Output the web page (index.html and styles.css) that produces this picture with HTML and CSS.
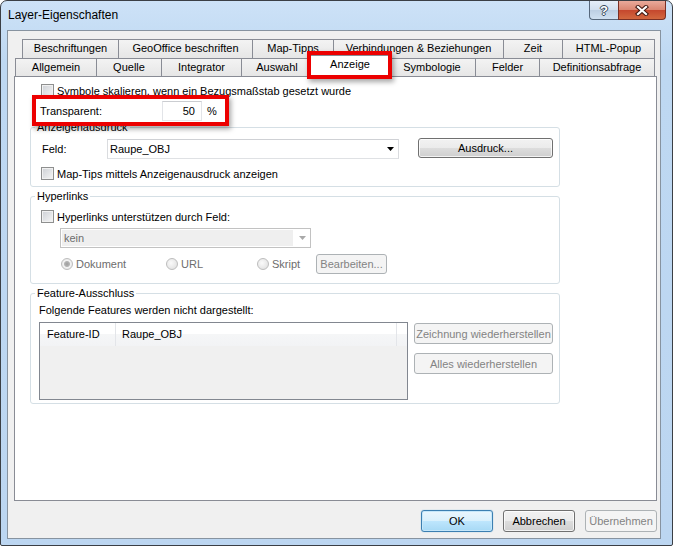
FILE: index.html
```html
<!DOCTYPE html>
<html lang="de">
<head>
    <meta charset="UTF-8">
    <title>Layer-Eigenschaften</title>
    <link rel="stylesheet" href="styles.css">
</head>
<body>
    <div class="window">
        <div class="titlebar">
            <span class="title">Layer-Eigenschaften</span>
            <div class="caption-buttons">
                <span class="cap-btn cap-help">?</span>
                <span class="cap-btn cap-close">
                    <svg width="14" height="11" viewBox="0 0 14 11">
                        <path d="M3 2 L11 9 M11 2 L3 9" stroke="#3f1710" stroke-width="4.2" stroke-linecap="square"/>
                        <path d="M3 2 L11 9 M11 2 L3 9" stroke="#ffffff" stroke-width="2.2" stroke-linecap="square"/>
                    </svg>
                </span>
            </div>
        </div>

        <div class="client">
            <div class="tabs">
                <div class="tab-row row-back">
                    <div class="tab">Beschriftungen</div>
                    <div class="tab">GeoOffice beschriften</div>
                    <div class="tab">Map-Tipps</div>
                    <div class="tab">Verbindungen &amp; Beziehungen</div>
                    <div class="tab">Zeit</div>
                    <div class="tab">HTML-Popup</div>
                </div>
                <div class="tab-row row-front">
                    <div class="tab">Allgemein</div>
                    <div class="tab">Quelle</div>
                    <div class="tab">Integrator</div>
                    <div class="tab">Auswahl</div>
                    <div class="tab active">Anzeige</div>
                    <div class="tab">Symbologie</div>
                    <div class="tab">Felder</div>
                    <div class="tab">Definitionsabfrage</div>
                </div>
            </div>

            <div class="panel">
                <div class="check-row top-check">
                    <span class="checkbox"></span>Symbole skalieren, wenn ein Bezugsmaßstab gesetzt wurde
                </div>
                <div class="transparent-row">
                    <span class="field-label">Transparent:</span>
                    <span class="textbox">50</span>
                    <span class="unit">%</span>
                </div>

                <fieldset class="group group-display">
                    <legend>Anzeigenausdruck</legend>
                    <div class="field-row">
                        <span class="field-name">Feld:</span>
                        <div class="combo combo-field">
                            <span>Raupe_OBJ</span>
                            <svg class="combo-arrow" width="7" height="4" viewBox="0 0 7 4"><polygon points="0,0 7,0 3.5,4" fill="#000"/></svg>
                        </div>
                        <button class="btn btn-expr">Ausdruck...</button>
                    </div>
                    <div class="check-row spaced">
                        <span class="checkbox"></span>Map-Tips mittels Anzeigenausdruck anzeigen
                    </div>
                </fieldset>

                <fieldset class="group group-links">
                    <legend>Hyperlinks</legend>
                    <div class="check-row">
                        <span class="checkbox"></span>Hyperlinks unterstützen durch Feld:
                    </div>
                    <div class="combo combo-disabled">
                        <span class="combo-text">kein</span>
                        <svg class="combo-arrow" width="7" height="4" viewBox="0 0 7 4"><polygon points="0,0 7,0 3.5,4" fill="#a9a9a9"/></svg>
                    </div>
                    <div class="radio-row">
                        <span class="radio-item"><span class="radio checked"></span>Dokument</span>
                        <span class="radio-item"><span class="radio"></span>URL</span>
                        <span class="radio-item"><span class="radio"></span>Skript</span>
                        <button class="btn btn-edit" disabled>Bearbeiten...</button>
                    </div>
                </fieldset>

                <fieldset class="group group-exclude">
                    <legend>Feature-Ausschluss</legend>
                    <div class="exclude-caption">Folgende Features werden nicht dargestellt:</div>
                    <div class="exclude-body">
                        <div class="listview">
                            <div class="list-header">
                                <span class="col col-id">Feature-ID</span>
                                <span class="col col-name">Raupe_OBJ</span>
                                <span class="col col-rest"></span>
                            </div>
                        </div>
                        <div class="exclude-buttons">
                            <button class="btn btn-restore" disabled>Zeichnung wiederherstellen</button>
                            <button class="btn btn-restore" disabled>Alles wiederherstellen</button>
                        </div>
                    </div>
                </fieldset>
            </div>

            <div class="dialog-buttons">
                <button class="btn btn-dialog btn-default">OK</button>
                <button class="btn btn-dialog">Abbrechen</button>
                <button class="btn btn-dialog" disabled>Übernehmen</button>
            </div>
        </div>

        <!-- annotation boxes from the screenshot -->
        <div class="highlight hl-tab"></div>
        <div class="highlight hl-transparent"></div>
    </div>
</body>
</html>
```

FILE: styles.css
```css
* {
    box-sizing: border-box;
}
body {
    margin: 0;
    font-family: "Liberation Sans", Arial, sans-serif;
    font-size: 11px;
    color: #000;
    background: #fff;
}
.window {
    position: relative;
    width: 673px;
    height: 546px;
    border: 1px solid #3b3f45;
    border-radius: 7px 7px 2px 2px;
    background: linear-gradient(#cde2f7, #bed8f2 60px, #bcd6f1);
    padding: 0 11px 6px 6px;
    display: flex;
    flex-direction: column;
}
.titlebar {
    height: 29px;
    margin: 0 -11px 0 -6px;
    padding: 0 6px 0 7px;
    display: flex;
    justify-content: space-between;
    align-items: flex-start;
}
.title {
    font-size: 12px;
    line-height: 28px;
}
.caption-buttons {
    display: flex;
}
.cap-btn {
    height: 19px;
    border: 1px solid #56677b;
    border-top: none;
    display: flex;
    align-items: center;
    justify-content: center;
}
.cap-help {
    width: 29px;
    border-right: none;
    border-radius: 0 0 0 4px;
    background: linear-gradient(#e6eef8, #d2dfee 50%, #bccee3 50%, #cfe0f1);
    color: #fff;
    font-weight: bold;
    font-size: 13px;
    text-shadow: 1px 0 0 #36475a, -1px 0 0 #36475a, 0 1px 0 #36475a, 0 -1px 0 #36475a;
}
.cap-close {
    width: 48px;
    border-color: #7a2f24;
    border-radius: 0 0 4px 0;
    background: linear-gradient(#e9aa9b, #da8570 50%, #c5462d 50%, #d2683f);
}
.client {
    flex: 1;
    display: flex;
    flex-direction: column;
    background: #f0f0f0;
    border: 1px solid #8793a0;
    padding: 8px 3px 6px 6px;
}
.tabs {
    display: flex;
    flex-direction: column;
}
.tab-row {
    display: grid;
}
.row-back {
    height: 19px;
    margin-left: 8px;
    grid-template-columns: 96px 134px 81px 170px 59px 93px;
}
.row-front {
    height: 18px;
    margin-left: 1px;
    grid-template-columns: 81px 65px 80px 71px 76px 87px 64px 116px;
}
.tab {
    border: 1px solid #898c95;
    border-right: none;
    border-bottom: none;
    background: linear-gradient(#f3f3f3, #e6e6e6);
    text-align: center;
    line-height: 17px;
    white-space: nowrap;
}
.tab:last-child {
    border-right: 1px solid #898c95;
}
.tab.active {
    position: relative;
    z-index: 2;
    margin: -3px -2px -1px;
    background: #fff;
    border-right: 1px solid #898c95;
    line-height: 16px;
}
.panel {
    flex: 1;
    background: #fff;
    border: 1px solid #898c95;
    padding: 7px 0 0 15px;
}
.check-row {
    display: flex;
    align-items: center;
    height: 13px;
}
.top-check {
    padding-left: 11px;
}
.check-row.spaced {
    margin-top: 8px;
}
.checkbox {
    width: 13px;
    height: 13px;
    margin-right: 3px;
    border: 1px solid #8e8f8f;
    background: linear-gradient(135deg, #cdd0d5, #f6f6f6);
    box-shadow: inset 0 0 0 1px #f1f1f1;
}
.transparent-row {
    display: flex;
    align-items: center;
    height: 20px;
    margin-top: 4px;
    padding-left: 10px;
}
.field-label {
    width: 122px;
}
.textbox {
    width: 40px;
    height: 20px;
    border: 1px solid;
    border-color: #cbcdd1 #e2e4e8 #e6e8eb #e2e4e8;
    text-align: right;
    padding-right: 6px;
    line-height: 18px;
}
.unit {
    margin-left: 5px;
}
.group {
    margin: 0;
    min-width: 0;
    width: 530px;
    border: 1px solid #d5dfe5;
    border-radius: 3px;
    padding: 5px 6px 6px 10px;
}
.group legend {
    padding: 0 2px;
    margin-left: -6px;
    line-height: 13px;
}
.field-row {
    display: flex;
    align-items: center;
    height: 20px;
}
.field-name {
    width: 65px;
    margin-left: 1px;
}
.combo {
    height: 20px;
    display: flex;
    align-items: center;
    justify-content: space-between;
    border: 1px solid;
    border-color: #cfd1d5 #dadcdf #dfe1e4 #dadcdf;
    background: #fff;
    padding: 0 4px 0 2px;
}
.combo-field {
    width: 292px;
}
.btn {
    font: inherit;
    color: #000;
    padding: 0;
    border: 1px solid #707070;
    border-radius: 3px;
    background: linear-gradient(#f2f2f2, #ebebeb 50%, #dddddd 50%, #cfcfcf);
    box-shadow: inset 0 0 0 1px rgba(255, 255, 255, 0.75);
}
.btn:disabled {
    color: #838383;
    border-color: #adb2b5;
    background: #f4f4f4;
    box-shadow: none;
}
.btn-expr {
    width: 135px;
    height: 20px;
    margin-left: 19px;
    margin-top: -2px;
}
.group-links {
    margin-top: 3px;
    padding-top: 7px;
    padding-bottom: 9px;
}
.combo-disabled {
    width: 251px;
    margin: 5px 0 0 19px;
    border-color: #c2c2c2;
    padding: 1px 4px 1px 1px;
}
.combo-text {
    flex: 1;
    height: 100%;
    background: #efefef;
    color: #6d6d6d;
    line-height: 16px;
    padding-left: 2px;
    margin-right: 6px;
}
.radio-row {
    display: grid;
    grid-template-columns: 105px 91px 59px 71px;
    align-items: center;
    height: 20px;
    margin: 6px 0 0 20px;
    color: #6d6d6d;
}
.radio-item {
    display: flex;
    align-items: center;
}
.radio {
    width: 12px;
    height: 12px;
    margin-right: 3px;
    border-radius: 50%;
    border: 1px solid #bdbdbd;
    background: radial-gradient(circle at 40% 40%, #fafafa, #dcdcdc);
}
.radio.checked {
    background: radial-gradient(circle, #9d9d9d 0, #b4b4b4 2.5px, #f2f2f2 3.5px, #e0e0e0);
}
.btn-edit {
    width: 71px;
    height: 20px;
    color: #6f6f6f;
}
.group-exclude {
    margin-top: 3px;
    padding-top: 4px;
    padding-bottom: 3px;
}
.exclude-caption {
    line-height: 13px;
    margin-left: -2px;
}
.exclude-body {
    display: flex;
    gap: 6px;
    margin: 5px 0 0 -2px;
}
.listview {
    width: 369px;
    height: 78px;
    border: 1px solid #828790;
    background: #f0f0f0;
}
.list-header {
    display: flex;
    height: 23px;
    background: linear-gradient(#ffffff, #ffffff 50%, #f5f6f7 50%, #f2f3f5);
}
.col {
    line-height: 23px;
    border-right: 1px solid #e3e5e9;
}
.col-id {
    width: 76px;
    padding-left: 7px;
}
.col-name {
    width: 281px;
    padding-left: 6px;
}
.col-rest {
    flex: 1;
    border-right: none;
}
.exclude-buttons {
    display: flex;
    flex-direction: column;
    gap: 9px;
    margin-top: 1px;
}
.btn-restore {
    width: 139px;
    height: 21px;
}
.dialog-buttons {
    display: flex;
    justify-content: flex-end;
    gap: 10px;
    margin-top: 9px;
}
.btn-dialog {
    width: 72px;
    height: 22px;
}
.btn-default {
    border-color: #3c7fb1;
    background: linear-gradient(#eaf6fd, #d9f0fc 50%, #bee6fd 50%, #a7d9f5);
    box-shadow: inset 0 0 0 1px #c5e7fa, 0 0 1px #5fa9d6;
}
.highlight {
    position: absolute;
    border: 4px solid #ec0000;
    box-shadow: 2px 3px 5px rgba(0, 0, 0, 0.35);
    z-index: 5;
}
.hl-tab {
    left: 306px;
    top: 50px;
    width: 85px;
    height: 28px;
}
.hl-transparent {
    left: 31px;
    top: 94px;
    width: 197px;
    height: 31px;
}
```
